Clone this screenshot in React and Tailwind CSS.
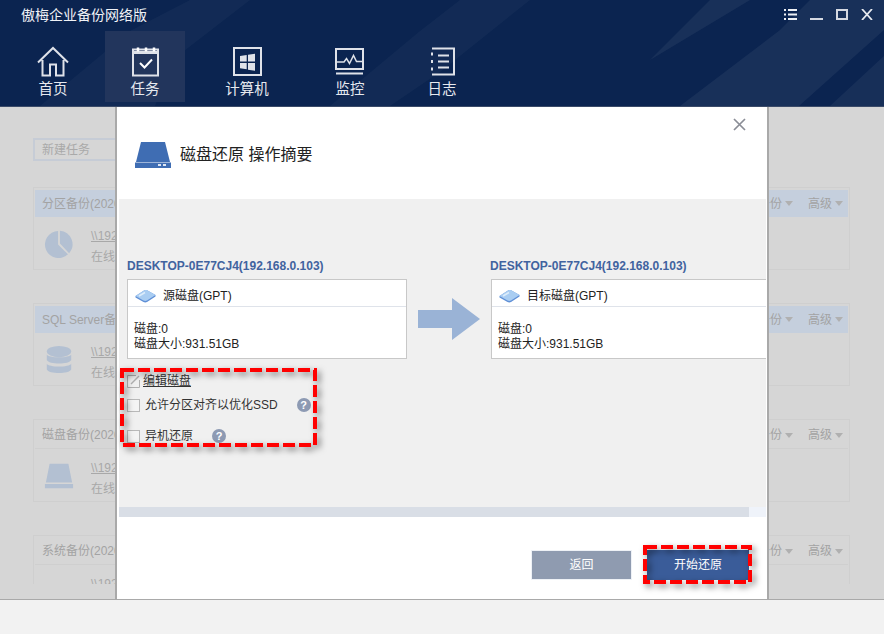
import React from "react";

const tabs = [
  { name: "首页", ml: "ml-[13px]", icon: "home" },
  { name: "任务", ml: "ml-[12px]", icon: "task", active: true },
  { name: "计算机", ml: "ml-[22px]", icon: "computer" },
  { name: "监控", ml: "ml-[23px]", icon: "monitor" },
  { name: "日志", ml: "ml-[12px]", icon: "log" },
];

const cards = [
  { title: "分区备份(2020/1/1 12:00)", blue: true, icon: "pie" },
  { title: "SQL Server备份(2020/1/1 12:00)", blue: true, icon: "db" },
  { title: "磁盘备份(2020/1/1 12:00)", icon: "disk" },
  { title: "系统备份(2020/1/1 12:00)", icon: "win" },
];

const TabIcon = ({ type }) => {
  const c = "#dfe2e9";
  return (
    <svg width="34" height="32" viewBox="0 0 34 32" fill="none" stroke={c} strokeWidth="2" className={type === "home" ? "" : "ml-[2px]"}>
      {type === "home" && (
        <path d="M2 16.500 17 2l15 14.500M6.500 14v15.500h7.500v-11h6v11h7.500V14" />
      )}
      {type === "task" && (
        <>
          <rect x="4" y="3.500" width="25" height="26" />
          <path d="M4 6.500h25" strokeWidth="3" />
          <path d="M9 1.500v4M17 1.500v4M25 1.500v4" strokeWidth="2.500" stroke="#fff" />
          <path d="m11 17 4.500 4.500 7.500-8" strokeWidth="2" stroke="#fff" />
        </>
      )}
      {type === "computer" && (
        <>
          <rect x="3" y="2" width="27" height="27" />
          <path d="m9 10 6.700-1v6.500H9zM17 8.800l7-1.100v7.800h-7zM9 17h6.700v6.200L9 22.200zM17 17h7v7.800l-7-1.100z" fill={c} stroke="none" />
        </>
      )}
      {type === "monitor" && (
        <>
          <rect x="2" y="3" width="27" height="20" />
          <path d="M2 16h8l2.500-3.500 3 5 4-8 3 6H29" strokeWidth="1.500" />
          <path d="M2 27.500h27" strokeWidth="2" />
        </>
      )}
      {type === "log" && (
        <>
          <path d="M6 2.500h22v26H6" />
          <path d="M6 6.500v3M6 14v3M6 21.500v3" strokeWidth="2" />
          <path d="M12 9.500h11M12 15.500h11M12 21.500h11" strokeWidth="2" />
        </>
      )}
    </svg>
  );
};

const CardIcon = ({ type }) => {
  const c = "#b3c0d2";
  return (
    <svg width="30" height="30" viewBox="0 0 32 32" fill={c} className="shrink-0">
      {type === "pie" && (
        <>
          <path d="M15 2a14.500 14.500 0 1 0 10.500 25L15 16.500z" />
          <path d="M17 1.800a14.500 14.500 0 0 1 9.800 24L17 15.500z" />
        </>
      )}
      {type === "db" && (
        <>
          <ellipse cx="16" cy="7" rx="13" ry="6" />
          <path d="M3 10c2 4 24 4 26 0v6c-2 5-24 5-26 0zM3 20c2 4 24 4 26 0v6c-2 5-24 5-26 0z" />
        </>
      )}
      {type === "disk" && <path d="M6 3h20l4 20H2zM1 24.500h30V29H1z" />}
      {type === "win" && <path d="M2 12l13-2v9H2zM17 9.500 30 8v11H17zM2 21h13v9L2 28zM17 21h13v11l-13-2z" />}
    </svg>
  );
};

const BgCard = ({ card }) => (
  <div className="h-[83px] shrink-0 border border-[#cfcfcf] px-px pt-[2px]">
    <div className={`h-[27px] flex items-center justify-between pl-[7px] pr-[5px] text-[12px] text-[#a3a3a3] ${card.blue ? "bg-[#c5cfdd]" : "border-b border-[#cfcfcf]"}`}>
      <span>{card.title}</span>
      <span className="flex items-center">
        <span>备份</span>
        <span className="ml-[3px] border-x-[4px] border-t-[5px] border-x-transparent border-t-[#b0b0b0]"></span>
        <span className="ml-[15px]">高级</span>
        <span className="ml-[3px] border-x-[4px] border-t-[5px] border-x-transparent border-t-[#b0b0b0]"></span>
      </span>
    </div>
    <div className="flex pl-[9px] pt-[12px]">
      <CardIcon type={card.icon} />
      <div className="ml-[17px] -mt-[3px] text-[12px] leading-[21px] text-[#a8a8a8]">
        <div className="underline">\\192.168.0.103\backup</div>
        <div>在线</div>
      </div>
    </div>
  </div>
);

const DiskBox = ({ name, cut }) => (
  <div className={`h-[80px] border border-[#c8c8c8] bg-white w-[280px] ${cut ? "border-r-0" : ""}`}>
    <div className="h-[27px] flex items-center border-b border-[#dfe3ea] pl-[7px] pt-[6px]">
      <svg width="21" height="14" viewBox="0 0 21 14">
        <path d="M.5 7 9 1.500c1-.6 2.500-.6 3.500 0l8 4.500v1.500L12 13c-1 .5-2.500.5-3.500 0L.5 8.500z" fill="#5f8fd6" />
        <path d="M.5 7 9 1.500c1-.6 2.500-.6 3.500 0l8 4.500-8.500 5.500c-1 .5-2.500.5-3.500 0z" fill="#a9cdf2" />
        <path d="M4 7 10 3.500" stroke="#dcecfb" strokeWidth="1.500" />
      </svg>
      <span className="ml-[7px] text-[12px] text-[#222]">{name}</span>
    </div>
    <div className="pl-[6px] pt-[15px] text-[12px] leading-[15px] text-[#222]">
      <div>磁盘:0</div>
      <div>磁盘大小:931.51GB</div>
    </div>
  </div>
);

const Help = ({ className }) => (
  <span className={`w-[14px] h-[14px] rounded-full bg-[#8d9ab3] text-white text-[11px] font-bold leading-[14px] text-center ${className}`}>?</span>
);

const Check = () => <span className="w-[13px] h-[13px] border border-[#b9b9b9] bg-[#f4f4f4] shrink-0"></span>;

const App = () => {
  return (
    <div className="relative w-[884px] h-[634px] flex flex-col overflow-hidden bg-[#d6d6d6] font-['Liberation_Sans','Noto_Sans_CJK_SC',sans-serif]">
      {/* top bar */}
      <div className="relative h-[107px] shrink-0 bg-[#0b2450] border-b border-[#3a4a68]">
        <svg className="absolute inset-0" width="884" height="106" viewBox="0 0 884 106">
          <path d="M130 31 190 0h60l-75 58-20 48H40zM330 106l90-75 40-31h70l-90 72-50 34z" fill="#fff" opacity="0.03" />
          <path d="M680 106 780 30l30-30h74v30l-85 76zM700 30l50-30h-40l-60 60z" fill="#fff" opacity="0.055" />
          <path d="M830 106l54-50v50z" fill="#fff" opacity="0.05" />
        </svg>
        <div className="relative h-[31px] flex items-center pl-[21px] text-[14px] text-[#f0f2f6]">傲梅企业备份网络版</div>
        <div className="relative flex">
          {tabs.map((tab) => (
            <div
              key={tab.name}
              className={`${tab.ml} w-[80px] h-[71px] flex flex-col items-center pt-[15px] ${tab.active ? "bg-[#22355c]" : ""}`}
            >
              <TabIcon type={tab.icon} />
              <span className="mt-[1px] text-[14.500px] leading-[20px] text-[#e6e9ef]">{tab.name}</span>
            </div>
          ))}
        </div>
        <div className="absolute top-[9px] right-[11px] flex items-center gap-[13px]">
          <svg width="13" height="11" viewBox="0 0 13 11" fill="#eef0f4">
            <path d="M0 0h2v2H0zM4 0h9v2H4zM0 4.500h2v2H0zM4 4.500h9v2H4zM0 9h2v2H0zM4 9h9v2H4z" />
          </svg>
          <svg width="13" height="11" viewBox="0 0 13 11" fill="#d5d9e2"><path d="M0 9h13v2H0z" /></svg>
          <svg width="12" height="11" viewBox="0 0 12 11" fill="none" stroke="#d5d9e2" strokeWidth="2"><path d="M1 1h10v9H1z" /></svg>
          <svg width="12" height="11" viewBox="0 0 12 11" fill="none" stroke="#e6e9ef" strokeWidth="1.800"><path d="m1 0 10 11M11 0 1 11" /></svg>
        </div>
      </div>

      {/* blurred page behind the dialog */}
      <div className="h-[492px] shrink-0 pl-[33px] pr-[34px] pt-[31px]">
        <div className="w-[100px] h-[23px] border-2 border-[#c6ccd6] pl-[7px] text-[12px] leading-[20px] text-[#a9a9a9]">新建任务</div>
        <div className="mt-[26px] h-[397px] flex flex-col gap-[33px] overflow-hidden">
          {cards.map((card) => (
            <BgCard key={card.title} card={card} />
          ))}
        </div>
      </div>

      <div className="flex-1 bg-[#f2f2f2] border-t border-[#a9a9a9]"></div>

      {/* dialog */}
      <div className="absolute left-[115px] top-[107px] w-[654px] h-[492px] bg-white border-x-2 border-[#a9a9a9] flex flex-col">
        <div className="relative h-[92px] shrink-0 flex items-center pl-[18px] pt-[3px]">
          <svg width="36" height="26" viewBox="0 0 36 26" fill="#3f6db3">
            <path d="M6 0h24l5 20H1z" />
            <path d="M0 20.500h36V26H0z" />
            <path d="M23 22h3v2h-3zM28 22h3v2h-3z" fill="#dfe7f3" />
          </svg>
          <span className="ml-[9px] text-[16px] text-[#222]">磁盘还原 操作摘要</span>
          <svg className="absolute left-[616px] top-[11px]" width="13" height="13" viewBox="0 0 13 13" fill="none" stroke="#8a8d96" strokeWidth="1.700">
            <path d="m1 1 11 11M12 1 1 12" />
          </svg>
        </div>

        <div className="relative ml-[2px] mr-[1px] h-[318px] shrink-0 bg-[#f0f0f0] overflow-hidden">
          <div className="flex pl-[8px] pt-[60px]">
            <div className="w-[280px] shrink-0">
              <div className="h-[20px] text-[12px] font-bold leading-[15px] text-[#41639f] whitespace-nowrap">DESKTOP-0E77CJ4(192.168.0.103)</div>
              <DiskBox name="源磁盘(GPT)" />
              <div className="mt-[14px] flex items-center h-[16px] text-[12px] text-[#333]">
                <svg width="13" height="13" viewBox="0 0 13 13" fill="none" stroke="#b0b0b0" className="shrink-0">
                  <path d="M9 .500H.500v12h12V5" />
                  <path d="M12 1 4 9" strokeWidth="1.500" />
                </svg>
                <span className="ml-[3px] underline">编辑磁盘</span>
              </div>
              <div className="mt-[8px] flex items-center h-[16px] text-[12px] text-[#333]">
                <Check />
                <span className="ml-[5px]">允许分区对齐以优化SSD</span>
                <Help className="ml-[19px]" />
              </div>
              <div className="mt-[15px] flex items-center h-[16px] text-[12px] text-[#333]">
                <Check />
                <span className="ml-[5px]">异机还原</span>
                <Help className="ml-[19px]" />
              </div>
            </div>
            <svg className="ml-[11px] mt-[39px] shrink-0" width="62" height="42" viewBox="0 0 62 42" fill="#9ab3d6">
              <path d="M0 12h34V0l28 21-28 21V30H0z" />
            </svg>
            <div className="ml-[10px] w-[280px] shrink-0">
              <div className="h-[20px] text-[12px] font-bold leading-[15px] text-[#41639f] whitespace-nowrap">DESKTOP-0E77CJ4(192.168.0.103)</div>
              <div className="ml-px">
                <DiskBox name="目标磁盘(GPT)" cut />
              </div>
            </div>
          </div>
          <div className="absolute left-0 right-0 bottom-0 h-[10px] bg-[#eff3fa]">
            <div className="w-[630px] h-full bg-[#d9dee6]"></div>
          </div>
        </div>

        <div className="flex justify-end gap-[15px] pt-[33px] pr-[18px]">
          <button className="w-[101px] h-[30px] bg-[#8f9bb0] border border-[#eef1f6] text-[12px] text-white">返回</button>
          <button className="w-[102px] h-[30px] bg-[#3a5c99] text-[12px] text-white">开始还原</button>
        </div>
      </div>

      {/* red annotation frames */}
      <svg className="absolute inset-0 pointer-events-none drop-shadow-[3px_3px_3px_rgba(0,0,0,0.5)]" width="884" height="634" fill="none" stroke="#ff0000" strokeWidth="4" strokeDasharray="12 4">
        <rect x="122" y="370" width="193" height="75" />
        <rect x="645" y="547" width="105" height="35" />
      </svg>
    </div>
  );
};

export default App;
